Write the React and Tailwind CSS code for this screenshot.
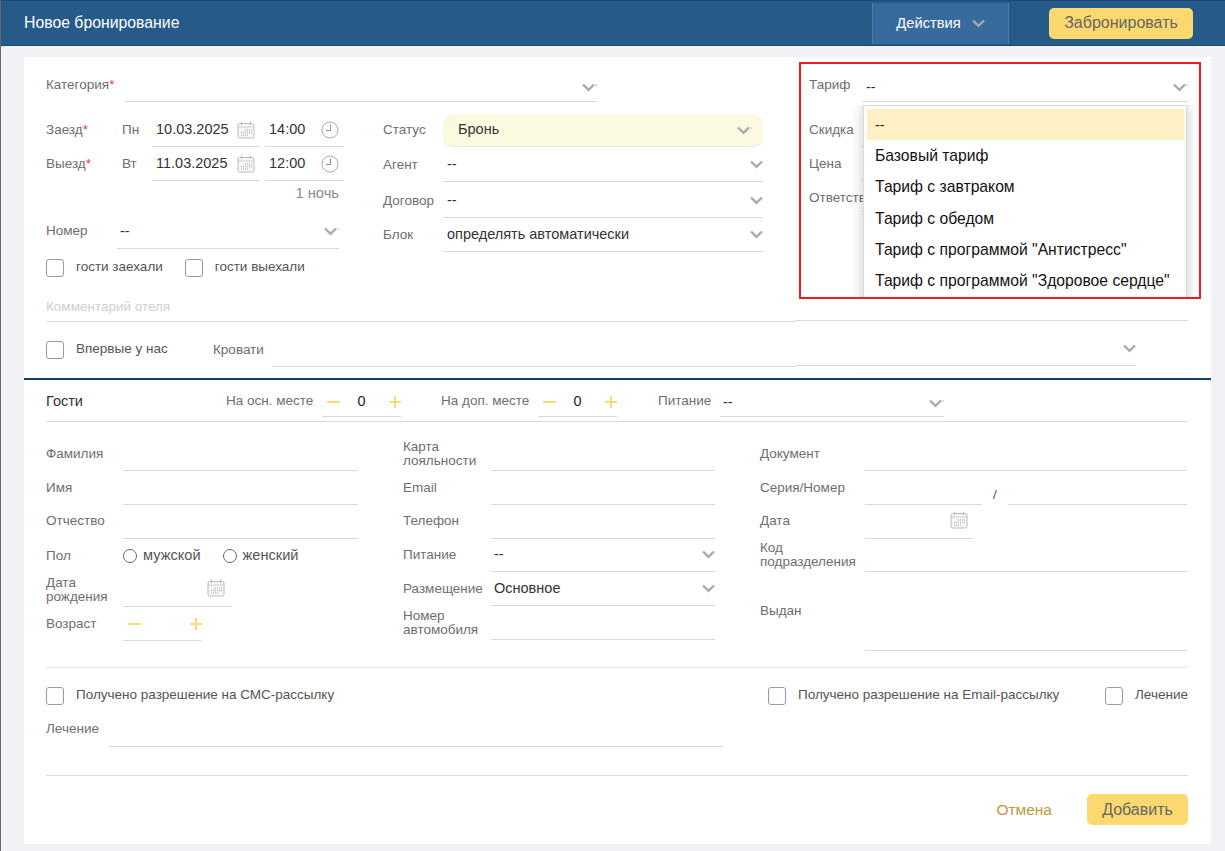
import { useState } from "react";

const line = "border-b border-[#d9d9d9]";
const label = "text-[13.5px] leading-[14px] text-[#6e6e6e] -mt-[1px]";

const Chevron = ({ tick = false, className = "" }) => (
  <svg width={tick ? 15 : 13} height="9" viewBox={tick ? "0 0 15 9" : "0 0 13 9"} fill="none" className={`shrink-0 ${className}`}>
    <path d="M1 1.5 L6.5 6.8 L12 1.5" stroke="#aaaaaa" strokeWidth="2.4" />
    {tick && <path d="M14 1 V3" stroke="#bdbdbd" strokeWidth="1" />}
  </svg>
);

const Calendar = ({ className = "" }) => (
  <svg width="18" height="18" viewBox="0 0 18 18" fill="none" className={`shrink-0 ${className}`}>
    <rect x="1" y="2.5" width="16" height="14.5" rx="1.5" fill="#f7f7f7" stroke="#bcbcbc" />
    <path d="M1 6 H17" stroke="#cfcfcf" />
    <path d="M4.5 0.5 V4 M13.5 0.5 V4" stroke="#bcbcbc" />
    <path d="M8 9 H15 M4 11.5 H15 M4 14 H12" stroke="#bdbdbd" strokeWidth="1.4" strokeDasharray="1 1" />
  </svg>
);

const Clock = () => (
  <svg width="18" height="18" viewBox="0 0 18 18" fill="none" className="shrink-0">
    <circle cx="9" cy="9" r="8" stroke="#ababab" />
    <path d="M9.5 3.5 V9.5 H5" stroke="#8f8f8f" />
  </svg>
);

const Minus = () => <span className="block h-[2px] w-[13px] bg-[#fbd976]" />;

const Plus = () => (
  <svg width="12" height="12" viewBox="0 0 12 12" className="shrink-0">
    <path d="M6 0 V12 M0 6 H12" stroke="#fbd976" strokeWidth="2" />
  </svg>
);

const Check = ({ text, className = "" }) => (
  <label className={`flex items-start ${className}`}>
    <input type="checkbox" className="appearance-none shrink-0 w-[18px] h-[18px] bg-white border border-[#9a9a9a] rounded-[3px]" />
    <span className="ml-[12px] pt-[1px] text-[13.5px] leading-[14px] text-[#555]">{text}</span>
  </label>
);

const Radio = ({ text, className = "" }) => (
  <label className={`flex items-center ${className}`}>
    <input type="radio" name="sex" className="appearance-none w-[14px] h-[14px] border border-[#666] rounded-full" />
    <span className="ml-[6px] text-[14.6px] text-[#555]">{text}</span>
  </label>
);

// label + underlined field, one line of the form
const Row = ({ title, w, h = 34, children, lineClass = "flex-1", center = false, lift = false }) => {
  return (
    <div className="flex items-end" style={{ height: h }}>
      <div className={`shrink-0 flex items-center ${center ? "self-center" : "h-[34px]"}`} style={{ width: w }}>
        <div className={`${label} ${lift ? "pb-[2px]" : ""}`}>{title}</div>
      </div>
      {lineClass === "none" ? (
        <div className="flex-1 self-center flex items-center">{children}</div>
      ) : (
        <div className={`h-[34px] flex items-center justify-between ${line} ${lineClass}`}>{children}</div>
      )}
    </div>
  );
};

const Value = ({ children, className = "" }) => (
  <span className={`text-[14.5px] text-[#333] ${className}`}>{children}</span>
);

const tariffs = [
  "Базовый тариф",
  "Тариф с завтраком",
  "Тариф с обедом",
  'Тариф с программой "Антистресс"',
  'Тариф с программой "Здоровое сердце"',
];

const Stepper = ({ value, className = "" }) => (
  <div className={`h-[30px] flex items-center justify-between pl-[5px] ${line} ${className}`}>
    <Minus />
    <span className="mr-[6px] text-[14.5px] text-[#222]">{value}</span>
    <Plus />
  </div>
);

export default function App() {
  const [open] = useState(true);
  return (
    <div className="min-h-[851px] bg-[#f0f2f6] border-l border-[#666] font-['Liberation_Sans',Arial,sans-serif] overflow-hidden">
      <header className="h-[46px] -ml-px bg-[#265a88] border-t border-b border-[#1d4a73] flex items-center pl-[24px]">
        <h1 className="w-[848px] text-[15.8px] text-white">Новое бронирование</h1>
        <button className="w-[137px] h-[41px] bg-[#376b9e] border-x border-[#4a7cac] flex items-center justify-center gap-[11px] text-[14.7px] text-white">
          Действия
          <Chevron />
        </button>
        <button className="ml-[40px] w-[144px] h-[31px] bg-[#fcd96f] rounded-[5px] text-[16px] text-[#666]">
          Забронировать
        </button>
      </header>

      <main className="ml-[23px] mt-[11px] w-[1187px] h-[787px] bg-white">
        <section className="h-[239px] pl-[22px] flex">
          <div className="w-[717px]">
            <div className="h-[45px] flex items-end">
              <div className="w-[79px] self-center pt-[8px]">
                <span className="text-[13.5px] text-[#6e6e6e]">
                  Категория<span className="text-[#e8364a]">*</span>
                </span>
              </div>
              <div className={`w-[472px] h-[28px] flex items-center justify-end ${line}`}>
                <Chevron tick />
              </div>
            </div>

            <div className="flex">
              <div className="w-[298px]">
                <div className="mt-[11px] h-[34px] flex items-end">
                  <div className="w-[76px] self-center">
                    <div className={label}>
                      Заезд<span className="text-[#e8364a]">*</span>
                    </div>
                  </div>
                  <div className={`w-[30px] self-center ${label}`}>Пн</div>
                  <div className={`w-[108px] h-[34px] pl-[4px] pr-[5px] flex items-center justify-between ${line}`}>
                    <Value>10.03.2025</Value>
                    <Calendar />
                  </div>
                  <div className={`ml-[5px] w-[79px] h-[34px] pl-[4px] pr-[5px] flex items-center justify-between ${line}`}>
                    <Value>14:00</Value>
                    <Clock />
                  </div>
                </div>
                <div className="h-[34px] flex items-end">
                  <div className="w-[76px] self-center">
                    <div className={label}>
                      Выезд<span className="text-[#e8364a]">*</span>
                    </div>
                  </div>
                  <div className={`w-[30px] self-center ${label}`}>Вт</div>
                  <div className={`w-[108px] h-[34px] pl-[4px] pr-[5px] flex items-center justify-between ${line}`}>
                    <Value>11.03.2025</Value>
                    <Calendar />
                  </div>
                  <div className={`ml-[5px] w-[79px] h-[34px] pl-[4px] pr-[5px] flex items-center justify-between ${line}`}>
                    <Value>12:00</Value>
                    <Clock />
                  </div>
                </div>
                <div className="h-[24px] pr-[5px] flex items-center justify-end text-[14.7px] text-[#8a8a8a]">1 ночь</div>
                <div className="h-[44px] flex items-end">
                  <div className="w-[71px] self-center pt-[8px]">
                    <div className={label}>Номер</div>
                  </div>
                  <div className={`w-[222px] h-[34px] pl-[3px] flex items-center justify-between ${line}`}>
                    <Value>--</Value>
                    <Chevron tick />
                  </div>
                </div>
                <div className="mt-[10px] flex">
                  <Check text="гости заехали" />
                  <Check text="гости выехали" className="ml-[22px]" />
                </div>
              </div>

              <div className="ml-[39px] w-[380px]">
                <div className="mt-[12px] h-[33px] flex">
                  <div className="w-[60px] self-center">
                    <div className={label}>Статус</div>
                  </div>
                  <div className="flex-1 pl-[15px] pr-[11px] flex items-center justify-between bg-[#fbf9e0] rounded-[10px] border-b border-[#e6e6e6]">
                    <Value>Бронь</Value>
                    <Chevron tick />
                  </div>
                </div>
                <Row title="Агент" w={60} h={35}>
                  <Value className="pl-[4px]">--</Value>
                  <Chevron />
                </Row>
                <Row title="Договор" w={60} h={36}>
                  <Value className="pl-[4px]">--</Value>
                  <Chevron />
                </Row>
                <Row title="Блок" w={60} h={34}>
                  <Value className="pl-[4px]">определять автоматически</Value>
                  <Chevron />
                </Row>
              </div>
            </div>
          </div>

          <div className="relative ml-[46px] w-[379px]">
            <div className="h-[45px] flex items-end">
              <div className="w-[53px] self-center pt-[8px]">
                <span className="text-[13.5px] text-[#6e6e6e]">Тариф</span>
              </div>
              <div className={`flex-1 h-[28px] pl-[4px] flex items-center justify-between ${line}`}>
                <Value>--</Value>
                <Chevron tick />
              </div>
            </div>
            <div className="mt-[11px]">
              <Row title="Скидка" w={53} lineClass="w-[320px]" />
              <Row title="Цена" w={53} lineClass="w-[320px]" />
              <Row title="Ответственный" w={53} lineClass="w-[320px]" />
            </div>

            {open && (
              <div className="absolute left-[34px] top-[48px] w-[357px] h-[192px] pl-[20px] pr-[13px] overflow-hidden">
                <div className="h-[230px] pl-[3px] pr-[2px] pt-[3px] bg-white border border-[#dcdcdc] shadow-[0_0_12px_rgba(0,0,0,0.22)]">
                  <div className="h-[31px] pl-[8px] pt-[3px] flex items-center bg-[#fdf0c5] text-[14.5px] text-[#222]">--</div>
                  {tariffs.map((t) => (
                    <div key={t} className="h-[31.4px] pl-[8px] flex items-center text-[15.7px] text-[#111]">
                      {t}
                    </div>
                  ))}
                </div>
              </div>
            )}
            <div className="absolute -left-[10px] top-[5px] w-[402px] h-[237px] border-2 border-[#ed1c24] pointer-events-none" />
          </div>
        </section>

        <section className="h-[26px] ml-[22px] mr-[23px] flex items-end">
          <div className={`w-[750px] h-[26px] flex items-center ${line}`}>
            <span className="text-[13.5px] text-[#cfcfcf] -mt-[2px]">Комментарий отеля</span>
          </div>
          <div className={`w-[394px] mb-[1px] ${line}`} />
        </section>

        <section className="h-[45px] pl-[22px] flex items-end">
          <Check text="Впервые у нас" className="w-[167px] self-start mt-[19px]" />
          <div className="w-[60px] self-center pt-[8px]">
            <span className="text-[13.5px] text-[#6e6e6e]">Кровати</span>
          </div>
          <div className={`w-[522px] h-[34px] ${line}`} />
          <div className={`w-[341px] h-[34px] mb-[1px] flex items-center justify-end ${line}`}>
            <Chevron />
          </div>
        </section>

        <div className="mt-[6px] ml-[831px] w-[335px] h-px bg-[#f5f5f5]" />
        <div className="mt-[4px] h-[2px] bg-[#12406f]" />

        <section className="ml-[22px] mr-[23px] h-[42px] flex items-end border-b border-[#d9d9d9] pb-[4px]">
          <div className="w-[180px] self-center pt-[6px] text-[14.5px] text-[#333]">Гости</div>
          <div className="w-[96px] self-center pt-[6px] text-[13.5px] text-[#6e6e6e]">На осн. месте</div>
          <Stepper value="0" className="w-[79px]" />
          <div className="ml-[40px] w-[97px] self-center pt-[6px] text-[13.5px] text-[#6e6e6e]">На доп. месте</div>
          <Stepper value="0" className="w-[79px]" />
          <div className="ml-[41px] w-[62px] self-center pt-[6px] text-[13.5px] text-[#6e6e6e]">Питание</div>
          <div className={`w-[224px] h-[30px] pl-[3px] flex items-center justify-between ${line}`}>
            <Value className="pt-[2px]">--</Value>
            <Chevron tick className="mt-[3px]" />
          </div>
        </section>

        <section className="ml-[22px] mr-[23px] h-[246px] flex gap-[45px] border-b border-[#e6e6e6]">
          <div className="w-[312px]">
            <Row title="Фамилия" w={77} h={49} />
            <Row title="Имя" w={77} />
            <Row title="Отчество" w={77} lift />
            <Row title="Пол" w={77} lineClass="none">
              <Radio text="мужской" />
              <Radio text="женский" className="ml-[22px]" />
            </Row>
            <Row title={<>Дата<br />рождения</>} w={77} lineClass="w-[108px] pr-[6px]">
              <span />
              <Calendar className="-mt-[4px]" />
            </Row>
            <Row title="Возраст" w={77} lineClass="w-[78px] pl-[5px]">
              <Minus />
              <span className="-mr-[1px]">
                <Plus />
              </span>
            </Row>
          </div>

          <div className="w-[312px]">
            <Row title={<>Карта<br />лояльности</>} w={88} h={49} />
            <Row title="Email" w={88} />
            <Row title="Телефон" w={88} lift />
            <Row title="Питание" w={88} h={33}>
              <Value className="pl-[3px]">--</Value>
              <Chevron />
            </Row>
            <Row title="Размещение" w={88}>
              <Value className="pl-[3px]">Основное</Value>
              <Chevron />
            </Row>
            <Row title={<>Номер<br />автомобиля</>} w={88} />
          </div>

          <div className="w-[427px]">
            <Row title="Документ" w={105} h={49} />
            <div className="h-[34px] flex items-end">
              <div className="w-[105px] h-[34px] flex items-center">
                <div className={label}>Серия/Номер</div>
              </div>
              <div className={`w-[117px] h-[34px] ${line}`} />
              <div className="w-[26px] h-[34px] pl-[11px] pt-[14px] text-[13.5px] text-[#555]">/</div>
              <div className={`w-[179px] h-[34px] ${line}`} />
            </div>
            <Row title="Дата" w={105} lineClass="w-[108px] pr-[5px]" lift>
              <span />
              <Calendar className="-mt-[4px]" />
            </Row>
            <Row title={<>Код<br />подразделения</>} w={105} h={33} />
            <Row title="Выдан" w={105} h={79} center />
          </div>
        </section>

        <section className="ml-[22px] mr-[23px] mt-[19px] flex">
          <Check text="Получено разрешение на СМС-рассылку" className="w-[722px]" />
          <Check text="Получено разрешение на Email-рассылку" className="w-[337px]" />
          <Check text="Лечение" />
        </section>

        <section className="ml-[22px] mr-[23px] h-[42px] flex items-end">
          <div className="w-[63px] self-center pt-[7px]">
            <div className={label}>Лечение</div>
          </div>
          <div className={`w-[614px] h-[34px] ${line}`} />
        </section>

        <section className="ml-[22px] mr-[23px] mt-[28px] border-t border-[#d9d9d9] pt-[18px] flex items-center justify-end">
          <button className="text-[15.5px] text-[#bd9a3f]">Отмена</button>
          <button className="ml-[35px] w-[101px] h-[31px] bg-[#fbd96f] rounded-[5px] text-[16px] text-[#666]">
            Добавить
          </button>
        </section>
      </main>
    </div>
  );
}
